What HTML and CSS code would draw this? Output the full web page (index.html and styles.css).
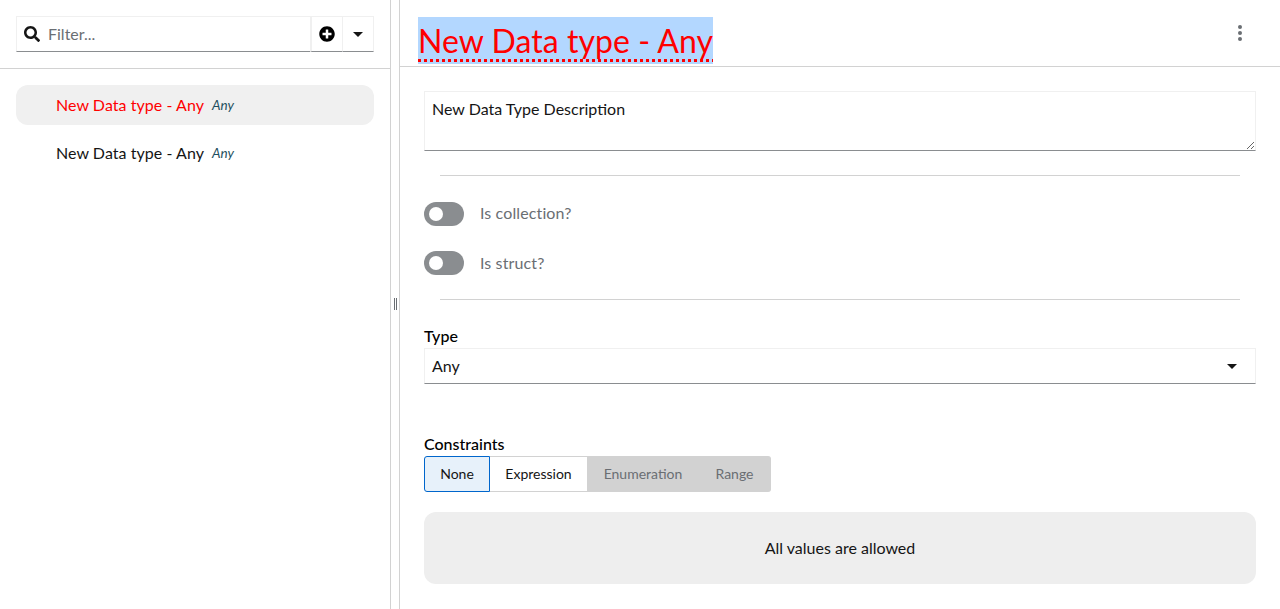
FILE: index.html
```html
<!DOCTYPE html>
<html lang="en">
<head>
    <meta charset="UTF-8">
    <title>Data Types</title>
    <link rel="stylesheet" href="styles.css">
</head>
<body>
    <div class="split">
        <aside class="nav">
            <div class="toolbar">
                <div class="filter">
                    <svg class="search-icon" viewBox="0 0 512 512" width="16" height="16"><path d="M505 442.7L405.3 343c-4.500-4.500-10.600-7-17-7H372c27.600-35.300 44-79.700 44-128C416 93.100 322.900 0 208 0S0 93.100 0 208s93.100 208 208 208c48.300 0 92.700-16.400 128-44v16.300c0 6.400 2.500 12.500 7 17l99.700 99.700c9.400 9.400 24.600 9.400 33.900 0l28.300-28.300c9.400-9.400 9.400-24.600.1-34zM208 336c-70.700 0-128-57.200-128-128 0-70.700 57.200-128 128-128 70.700 0 128 57.200 128 128 0 70.700-57.200 128-128 128z"/></svg>
                    <span class="filter-text">Filter...</span>
                </div>
                <div class="tool-btn tool-add">
                    <svg viewBox="0 0 512 512" width="16" height="16"><path d="M256 8C119 8 8 119 8 256s111 248 248 248 248-111 248-248S393 8 256 8zm144 276c0 6.600-5.400 12-12 12h-92v92c0 6.600-5.400 12-12 12h-56c-6.600 0-12-5.400-12-12v-92h-92c-6.600 0-12-5.400-12-12v-56c0-6.600 5.400-12 12-12h92v-92c0-6.600 5.400-12 12-12h56c6.600 0 12 5.400 12 12v92h92c6.600 0 12 5.400 12 12v56z"/></svg>
                </div>
                <div class="tool-btn tool-caret"><span class="caret"></span></div>
            </div>
            <ul class="type-list">
                <li class="type-item selected"><span class="type-name">New Data type - Any</span><em class="type-kind">Any</em></li>
                <li class="type-item"><span class="type-name">New Data type - Any</span><em class="type-kind">Any</em></li>
            </ul>
        </aside>
        <div class="splitter"><span class="grip"></span></div>
        <main class="editor">
            <header class="editor-head">
                <h1 class="title"><span class="title-text">New Data type - Any</span></h1>
                <div class="kebab"><i></i><i></i><i></i></div>
            </header>
            <div class="editor-body">
                <textarea class="description">New Data Type Description</textarea>
                <hr class="rule rule-top">
                <div class="switch-row">
                    <span class="switch"></span>
                    <span class="switch-label">Is collection?</span>
                </div>
                <div class="switch-row">
                    <span class="switch"></span>
                    <span class="switch-label">Is struct?</span>
                </div>
                <hr class="rule rule-bottom">
                <label class="field-label">Type</label>
                <div class="select">
                    <span class="select-value">Any</span>
                    <span class="caret"></span>
                </div>
                <label class="field-label constraints-label">Constraints</label>
                <div class="toggle-group">
                    <div class="toggle active">None</div>
                    <div class="toggle">Expression</div>
                    <div class="toggle off">Enumeration</div>
                    <div class="toggle off">Range</div>
                </div>
                <div class="notice">All values are allowed</div>
            </div>
        </main>
    </div>
</body>
</html>
```

FILE: styles.css
```css
html, body {
    margin: 0;
    height: 100%;
    overflow: hidden;
}
body {
    font-family: 'Lato', sans-serif;
    font-size: 16px;
    color: #151515;
    background: #fff;
}
.split {
    display: flex;
    height: 609px;
}
.nav {
    box-sizing: border-box;
    border-right: 1px solid #d2d2d2;
    flex: none;
    width: 391px;
}
.toolbar {
    display: flex;
    height: 69px;
    box-sizing: border-box;
    padding: 16px;
    border-bottom: 1px solid #d2d2d2;
}
.filter {
    flex: 1;
    display: flex;
    align-items: center;
    padding-left: 7px;
    border: 1px solid #f0f0f0;
    border-right: 0;
    border-bottom: 1px solid #8a8d90;
    height: 36px;
    box-sizing: border-box;
}
.search-icon {
    fill: #151515;
}
.filter-text {
    margin-left: 8px;
    padding-bottom: 2px;
    color: #6a6e73;
}
.tool-btn {
    height: 36px;
    box-sizing: border-box;
    display: flex;
    align-items: center;
    justify-content: center;
    border: 1px solid #f0f0f0;
    border-left: 0;
    border-bottom: 1px solid #8a8d90;
}
.tool-add {
    width: 33px;
    border-left: 2px solid #f0f0f0;
}
.tool-caret {
    width: 31px;
}
.caret {
    width: 0;
    height: 0;
    border-left: 5px solid transparent;
    border-right: 5px solid transparent;
    border-top: 5px solid #151515;
}
.type-list {
    list-style: none;
    margin: 16px 16px 0;
    padding: 0;
}
.type-item {
    height: 40px;
    display: flex;
    align-items: center;
    padding-left: 40px;
    border-radius: 12px;
    margin-bottom: 8px;
}
.type-item.selected {
    background: #f0f0f0;
}
.type-name {
    padding-bottom: 2px;
    letter-spacing: 0.05px;
}
.type-item.selected .type-name {
    color: #f00;
}
.type-kind {
    margin-left: 8px;
    font-size: 13.5px;
    color: #1e4f5e;
}
.splitter {
    width: 8px;
    flex: none;
    display: flex;
    align-items: center;
    justify-content: center;
}
.grip {
    width: 3px;
    height: 12px;
    margin-top: -1px;
    border-left: 1px solid #6a6e73;
    border-right: 1px solid #6a6e73;
    box-sizing: border-box;
}
.editor {
    flex: 1;
    border-left: 1px solid #d2d2d2;
    min-width: 0;
}
.editor-head {
    height: 67px;
    box-sizing: border-box;
    border-bottom: 1px solid #d2d2d2;
    display: flex;
    justify-content: space-between;
    padding: 17px 38px 0 18px;
}
.title {
    margin: 0;
    font-size: 32px;
    font-weight: 400;
    line-height: 47px;
    height: 47px;
    letter-spacing: 0.05px;
}
.title-text {
    display: block;
    color: #f00;
    background: #b3d7ff;
    text-decoration: underline dotted #f00 3px;
    text-decoration-skip-ink: none;
    text-underline-offset: 6px;
}
.kebab {
    display: flex;
    flex-direction: column;
    gap: 2px;
    margin-top: 8px;
}
.kebab i {
    width: 4px;
    height: 4px;
    border-radius: 50%;
    background: #6a6e73;
}
.editor-body {
    padding: 24px 24px 0;
}
.description {
    display: block;
    width: 100%;
    height: 60px;
    box-sizing: border-box;
    margin: 0;
    padding: 7px 7px 8px;
    font: inherit;
    color: #151515;
    border: 1px solid #f0f0f0;
    border-bottom: 1px solid #8a8d90;
    outline: none;
}
.rule {
    border: 0;
    border-top: 1px solid #d2d2d2;
    margin: 24px 16px 0;
}
.switch-row {
    display: flex;
    align-items: center;
    height: 24px;
    margin-top: 25px;
}
.rule-top + .switch-row {
    margin-top: 26px;
}
.switch {
    width: 40px;
    height: 24px;
    border-radius: 12px;
    background: #8a8d90;
    position: relative;
    flex: none;
}
.switch::before {
    content: "";
    position: absolute;
    left: 5px;
    top: 5px;
    width: 14px;
    height: 14px;
    border-radius: 50%;
    background: #fff;
}
.switch-label {
    margin-left: 16px;
    padding-bottom: 2px;
    letter-spacing: 0.12px;
    color: #6a6e73;
}
.rule-top + .switch-row .switch-label {
    padding-bottom: 4px;
}
.rule-bottom {
    margin-top: 24px;
}
.field-label {
    display: block;
    font-weight: 500;
    color: #000;
    margin-top: 25px;
    line-height: 22px;
}
.select {
    display: flex;
    justify-content: space-between;
    align-items: center;
    height: 36px;
    margin-top: 1px;
    box-sizing: border-box;
    padding: 0 18px 0 7px;
    border: 1px solid #f0f0f0;
    border-bottom: 1px solid #8a8d90;
}
.select-value {
    padding-bottom: 2px;
}
.constraints-label {
    margin-top: 49px;
}
.toggle-group {
    display: flex;
    width: fit-content;
    margin-top: 1px;
    font-size: 14px;
}
.toggle {
    height: 36px;
    box-sizing: border-box;
    display: flex;
    align-items: center;
    justify-content: center;
    padding-bottom: 2px;
    border: 1px solid #d2d2d2;
    border-left: 0;
}
.toggle:nth-child(1) { width: 66px; }
.toggle:nth-child(2) { width: 98px; }
.toggle:nth-child(3) { width: 111px; }
.toggle:nth-child(4) { width: 72px; }
.toggle.active {
    background: #e7f1fa;
    border: 1px solid #06c;
    border-radius: 3px 0 0 3px;
}
.toggle.off {
    background: #d2d2d2;
    color: #6a6e73;
}
.toggle.off:last-child {
    border-radius: 0 3px 3px 0;
}
.notice {
    height: 72px;
    margin-top: 20px;
    padding-bottom: 2px;
    box-sizing: border-box;
    border-radius: 12px;
    background: #eee;
    display: flex;
    align-items: center;
    justify-content: center;
    color: #151515;
}
```
